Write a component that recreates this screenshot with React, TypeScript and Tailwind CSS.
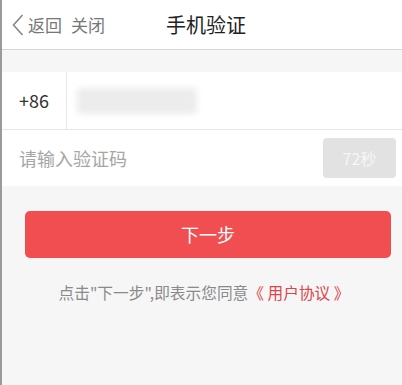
import React from "react";

export default function App() {
  return (
    <div
      className="w-[402px] h-[385px] bg-[#f6f6f6] border-l-2 border-[#9a9a9a] overflow-hidden"
      style={{ fontFamily: '"Noto Sans CJK SC", "Noto Sans", sans-serif' }}
    >
      <div className="h-[50px] bg-white border-b border-[#d6d6d6] relative flex items-center">
        <div className="flex items-center pl-[9px] text-[17px] text-[#777]">
          <svg width="14" height="24" viewBox="0 0 14 24" className="mr-[3px]">
            <path d="M11.5 2 L2.5 12 L11.5 22" fill="none" stroke="#888" strokeWidth="1.6" />
          </svg>
          <span>返回</span>
          <span className="ml-[9px]">关闭</span>
        </div>
        <div className="absolute left-0 right-0 text-center text-[20px] text-[#222] pointer-events-none pl-[8px]">
          手机验证
        </div>
      </div>
      <div className="h-[22px]" />
      <div className="bg-white">
        <div className="h-[58px] flex items-center border-b border-[#e6e6e6]">
          <div className="w-[65px] h-full flex items-center pl-[17px] text-[18px] text-[#333] border-r border-[#e6e6e6]">
            +86
          </div>
          <div className="ml-[10px] w-[120px] h-[26px] bg-[#ececec] blur-[3px] rounded" />
        </div>
        <div className="h-[56px] flex items-center justify-between pl-[17px] pr-[6px]">
          <span className="text-[18px] text-[#a6a6a6]">请输入验证码</span>
          <div className="w-[73px] h-[40px] rounded-[4px] bg-[#e2e2e2] flex items-center justify-center text-[16px] text-[#f6f6f6]">
            72秒
          </div>
        </div>
      </div>
      <div className="pl-[23px] pr-[11px] pt-[25px]">
        <div className="h-[47px] rounded-[5px] bg-[#f04e51] flex items-center justify-center text-[18px] text-white">
          下一步
        </div>
      </div>
      <div className="mt-[23px] text-center text-[15.7px] text-[#8a8a8a] pl-[4px]">
        点击"下一步",即表示您同意<span className="text-[#d9464b]">《 用户协议 》</span>
      </div>
    </div>
  );
}
